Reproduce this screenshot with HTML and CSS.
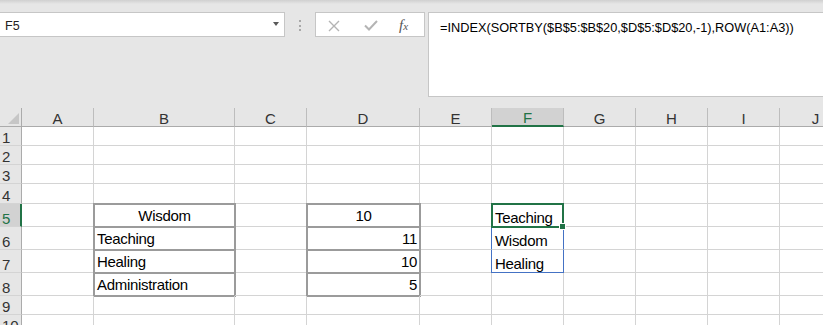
FILE: index.html
```html
<!DOCTYPE html>
<html lang="en">
<head>
    <meta charset="UTF-8">
    <meta name="viewport" content="width=device-width, initial-scale=1.0">
    <title>Book1 - Excel</title>
    <link rel="stylesheet" href="styles.css">
</head>
<body>
    <div class="formula-bar">
        <div class="name-box">
            <span class="name">F5</span>
            <span class="caret"></span>
        </div>
        <div class="grip"><i></i><i></i><i></i></div>
        <div class="fx-box">
            <svg class="icon-cancel" width="12" height="12" viewBox="0 0 12 12"><path d="M1 1L11 11M11 1L1 11" stroke="#b4b4b4" stroke-width="1.4" fill="none"/></svg>
            <svg class="icon-enter" width="14" height="11" viewBox="0 0 14 11"><path d="M1 5.5L5 9.5L13 1" stroke="#b4b4b4" stroke-width="2" fill="none"/></svg>
            <span class="fx">f<span>x</span></span>
        </div>
        <div class="formula">=INDEX(SORTBY($B$5:$B$20,$D$5:$D$20,-1),ROW(A1:A3))</div>
    </div>

    <div class="sheet">
        <div class="corner"><span></span></div>
        <div class="col-head">A</div><div class="col-head">B</div><div class="col-head">C</div><div class="col-head">D</div><div class="col-head">E</div>
        <div class="col-head active">F</div><div class="col-head">G</div><div class="col-head">H</div><div class="col-head">I</div><div class="col-head">J</div>

        <div class="row-head">1</div>
        <div class="cell"></div><div class="cell"></div><div class="cell"></div><div class="cell"></div><div class="cell"></div>
        <div class="cell"></div><div class="cell"></div><div class="cell"></div><div class="cell"></div><div class="cell"></div>

        <div class="row-head">2</div>
        <div class="cell"></div><div class="cell"></div><div class="cell"></div><div class="cell"></div><div class="cell"></div>
        <div class="cell"></div><div class="cell"></div><div class="cell"></div><div class="cell"></div><div class="cell"></div>

        <div class="row-head">3</div>
        <div class="cell"></div><div class="cell"></div><div class="cell"></div><div class="cell"></div><div class="cell"></div>
        <div class="cell"></div><div class="cell"></div><div class="cell"></div><div class="cell"></div><div class="cell"></div>

        <div class="row-head">4</div>
        <div class="cell"></div><div class="cell"></div><div class="cell"></div><div class="cell"></div><div class="cell"></div>
        <div class="cell"></div><div class="cell"></div><div class="cell"></div><div class="cell"></div><div class="cell"></div>

        <div class="row-head active">5</div>
        <div class="cell"></div>
        <div class="cell box center">Wisdom</div>
        <div class="cell"></div>
        <div class="cell box center">10</div>
        <div class="cell"></div>
        <div class="cell sel">Teaching</div>
        <div class="cell"></div><div class="cell"></div><div class="cell"></div><div class="cell"></div>

        <div class="row-head">6</div>
        <div class="cell"></div>
        <div class="cell box">Teaching</div>
        <div class="cell"></div>
        <div class="cell box right">11</div>
        <div class="cell"></div>
        <div class="cell spill">Wisdom</div>
        <div class="cell"></div><div class="cell"></div><div class="cell"></div><div class="cell"></div>

        <div class="row-head">7</div>
        <div class="cell"></div>
        <div class="cell box">Healing</div>
        <div class="cell"></div>
        <div class="cell box right">10</div>
        <div class="cell"></div>
        <div class="cell spill spill-end">Healing</div>
        <div class="cell"></div><div class="cell"></div><div class="cell"></div><div class="cell"></div>

        <div class="row-head">8</div>
        <div class="cell"></div>
        <div class="cell box">Administration</div>
        <div class="cell"></div>
        <div class="cell box right">5</div>
        <div class="cell"></div><div class="cell"></div>
        <div class="cell"></div><div class="cell"></div><div class="cell"></div><div class="cell"></div>

        <div class="row-head">9</div>
        <div class="cell"></div><div class="cell"></div><div class="cell"></div><div class="cell"></div><div class="cell"></div>
        <div class="cell"></div><div class="cell"></div><div class="cell"></div><div class="cell"></div><div class="cell"></div>

        <div class="row-head">10</div>
        <div class="cell"></div><div class="cell"></div><div class="cell"></div><div class="cell"></div><div class="cell"></div>
        <div class="cell"></div><div class="cell"></div><div class="cell"></div><div class="cell"></div><div class="cell"></div>
    </div>
</body>
</html>
```

FILE: styles.css
```css
body {
    margin: 0;
    height: 325px;
    overflow: hidden;
    background-color: #e6e6e6;
    font-family: 'Liberation Sans', Arial, sans-serif;
    color: #000;
}

/* 公式栏 */
.formula-bar {
    display: flex;
    align-items: flex-start;
    height: 108px;
    box-sizing: border-box;
    padding-top: 12px;
    background: linear-gradient(#d0d0d0, #e6e6e6 4px);
}
.name-box {
    display: flex;
    align-items: center;
    justify-content: space-between;
    width: 286px;
    height: 25px;
    box-sizing: border-box;
    margin-left: -1px;
    padding: 0 5px 0 5px;
    background-color: white;
    border: 1px solid #c6c6c6;
}
.name {
    padding-top: 3px;
    font-size: 12.5px;
    line-height: 15px;
    color: #222;
}
.caret {
    width: 0;
    height: 0;
    margin-bottom: 2px;
    border-left: 3.5px solid transparent;
    border-right: 3.5px solid transparent;
    border-top: 4px solid #595959;
}
.grip {
    display: flex;
    flex-direction: column;
    align-items: center;
    gap: 2.5px;
    width: 30px;
    padding-top: 8px;
}
.grip i {
    width: 2px;
    height: 2px;
    background-color: #a8a8a8;
}
.fx-box {
    display: flex;
    align-items: center;
    width: 110px;
    height: 25px;
    box-sizing: border-box;
    padding: 2px 0 0 12px;
    background-color: white;
    border: 1px solid #c6c6c6;
}
.icon-enter {
    margin-left: 24px;
}
.fx {
    margin-left: 21px;
    font-family: 'Liberation Serif', 'Times New Roman', serif;
    font-style: italic;
    font-size: 15px;
    color: #555;
}
.fx span {
    font-size: 11px;
}
.formula {
    flex: 1;
    height: 85px;
    box-sizing: border-box;
    margin-left: 3px;
    padding: 7px 0 0 11px;
    background-color: white;
    border: 1px solid #c6c6c6;
    border-right: none;
    font-size: 12.75px;
    line-height: 15px;
    white-space: nowrap;
}

/* 工作表网格 */
.sheet {
    display: grid;
    grid-template-columns: 22px 72px 141px 72px 113px 72px 72px 72px 72px 72px 72px;
    grid-template-rows: 19px 19px 19px 19px 20px 23px 23px 23px 23px 19px 19px;
    width: 851px;
    background-color: white;
    font-size: 15px;
    line-height: 14px;
}
.corner {
    display: flex;
    justify-content: flex-end;
    align-items: flex-end;
    padding: 0 2px 2px 0;
    background-color: #e6e6e6;
    border-right: 1px solid #ababab;
    border-bottom: 1px solid #ababab;
}
.corner span {
    width: 11px;
    height: 11px;
    background-color: #c6c6c6;
    clip-path: polygon(100% 0, 100% 100%, 0 100%);
}
.col-head {
    display: flex;
    justify-content: center;
    align-items: flex-end;
    background-color: #e6e6e6;
    border-right: 1px solid #bdbdbd;
    border-bottom: 1px solid #ababab;
    color: #333;
}
.row-head {
    display: flex;
    align-items: flex-end;
    padding-left: 2px;
    background-color: #e6e6e6;
    border-right: 1px solid #ababab;
    border-bottom: 1px solid #d4d4d4;
    color: #333;
}
.col-head.active,
.row-head.active {
    background-color: #d2d2d2;
    color: #217346;
}
.col-head.active {
    border-bottom: 2px solid #217346;
}
.row-head.active {
    border-right: 2px solid #217346;
}
.cell {
    display: flex;
    align-items: flex-end;
    padding: 0 3px 1px 3px;
    border-right: 1px solid #d4d4d4;
    border-bottom: 1px solid #d4d4d4;
    letter-spacing: -0.3px;
    white-space: nowrap;
}

/* 带边框的数据区域 */
.box {
    align-items: center;
    margin: -1px;
    padding: 0 2px;
    border: 2px solid #9b9b9b;
}
.box.center {
    justify-content: center;
}
.box.right {
    justify-content: flex-end;
}

/* 选中单元格和溢出区域 */
.sel {
    position: relative;
    z-index: 1;
    margin: -1px 0 -1px -1px;
    padding: 0 2px 1px 2px;
    border: 2px solid #217346;
}
.sel::after {
    content: "";
    position: absolute;
    right: -4px;
    bottom: -4px;
    width: 5px;
    height: 5px;
    background-color: #217346;
    border: 1px solid white;
}
.spill {
    margin-left: -1px;
    border-left: 1px solid #4472c4;
    border-right: 1px solid #4472c4;
}
.spill-end {
    border-bottom: 1px solid #4472c4;
}
```
